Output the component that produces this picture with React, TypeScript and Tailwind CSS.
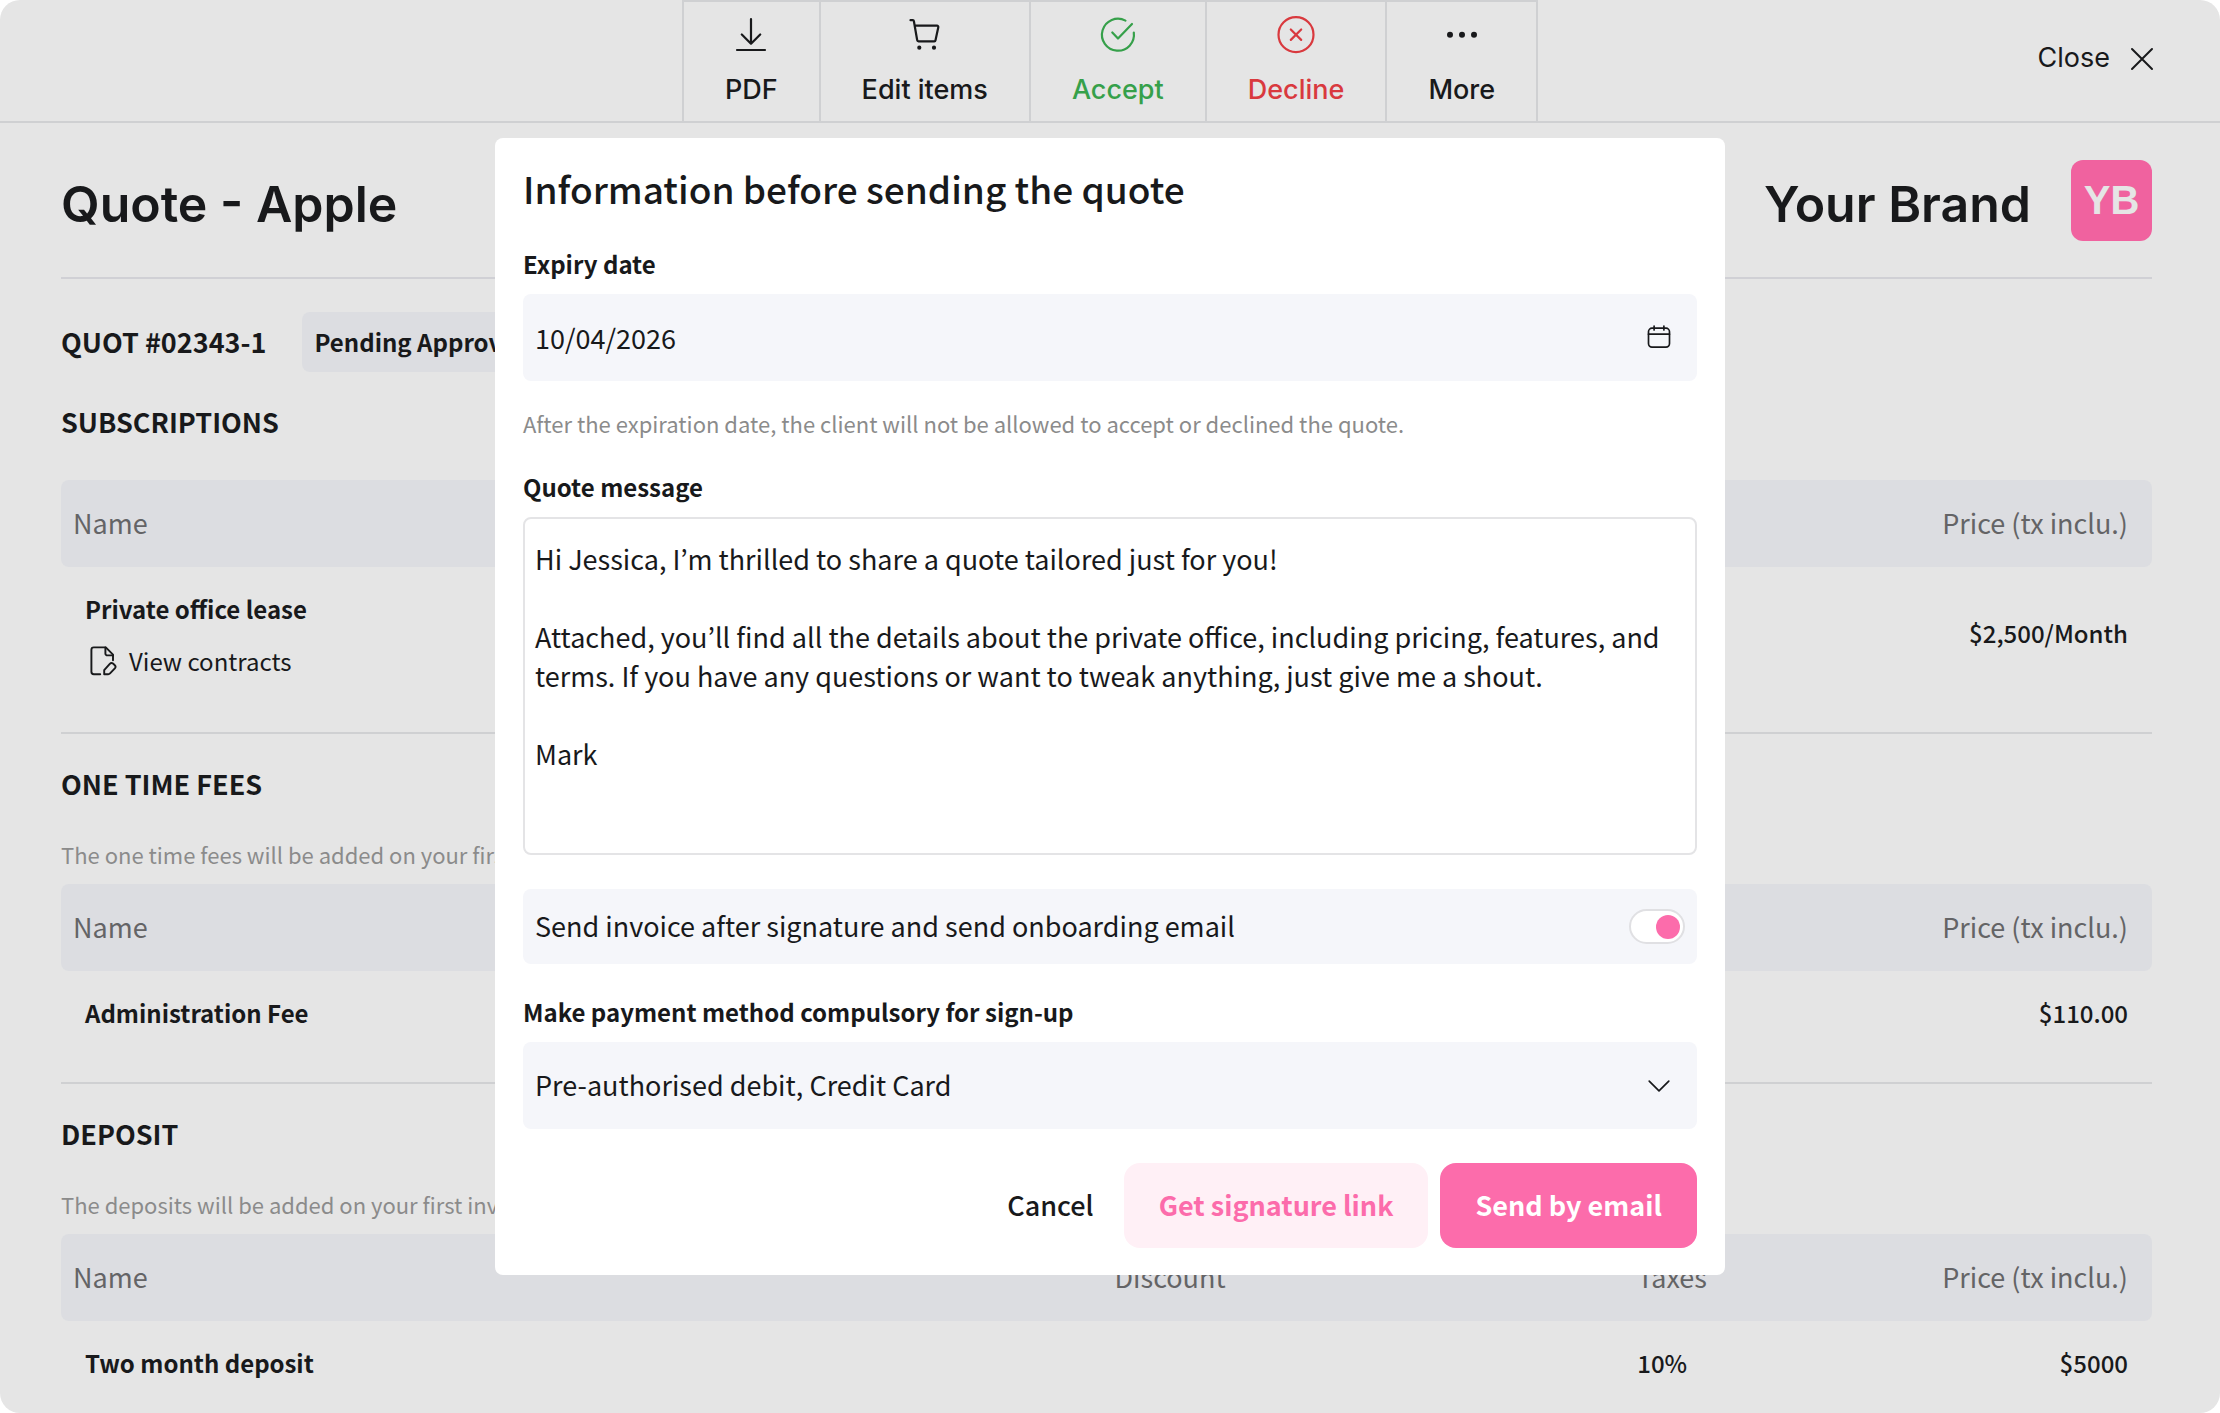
import { ReactNode } from 'react';
import clsx from 'clsx';

const fees = {
    subscriptions: [
        { name: 'Private office lease', price: '$2,500/Month', contracts: true },
    ],
    oneTime: [{ name: 'Administration Fee', price: '$110.00' }],
    deposit: [{ name: 'Two month deposit', taxes: '10%', price: '$5000' }],
};

const message = `Hi Jessica, I’m thrilled to share a quote tailored just for you!

Attached, you’ll find all the details about the private office, including pricing, features, and terms. If you have any questions or want to tweak anything, just give me a shout.

Mark`;

interface IconProps {
    size?: string;
    strokeWidth?: number;
    children: ReactNode;
}

const Icon = ({ size = 'size-10', strokeWidth = 2, children }: IconProps) => (
    <svg
        viewBox="0 0 40 40"
        fill="none"
        stroke="currentColor"
        strokeWidth={strokeWidth}
        strokeLinecap="round"
        strokeLinejoin="round"
        className={clsx('shrink-0', size)}
        aria-hidden="true"
    >
        {children}
    </svg>
);

const DownloadIcon = () => (
    <Icon strokeWidth={2.2}>
        <path d="M20 5v24.500M10.800 20.500l9.200 9.200 9.200-9.200M6 36h28" />
    </Icon>
);

const CartIcon = () => (
    <Icon strokeWidth={2.2}>
        <path d="M5.500 6.200h2.300c.6 0 1 .4 1.100 1l3.300 19c.1.700.6 1.100 1.300 1.100h15.800c.6 0 1.100-.4 1.200-1l2.800-13c.2-.9-.4-1.600-1.300-1.600H9.800" />
        <circle cx="14.300" cy="33.700" r="1" fill="currentColor" />
        <circle cx="29" cy="33.700" r="1" fill="currentColor" />
    </Icon>
);

const AcceptIcon = () => (
    <Icon strokeWidth={2.2}>
        <path d="M35.800 18.500A16 16 0 1 1 27.500 6.600" />
        <path d="m14.300 18.500 5.700 6L34 10" />
    </Icon>
);

const DeclineIcon = () => (
    <Icon strokeWidth={2.2}>
        <circle cx="20" cy="20.700" r="17.500" />
        <path d="m14.800 15.500 10.400 10.400M25.200 15.500 14.800 25.900" />
    </Icon>
);

const MoreIcon = () => (
    <Icon>
        <g fill="currentColor" stroke="none">
            <circle cx="8" cy="20.700" r="3" />
            <circle cx="20" cy="20.700" r="3" />
            <circle cx="32" cy="20.700" r="3" />
        </g>
    </Icon>
);

interface ToolbarButtonProps {
    label: string;
    icon: ReactNode;
    className?: string;
}

const ToolbarButton = ({ label, icon, className }: ToolbarButtonProps) => (
    <button
        type="button"
        className={clsx(
            'flex flex-col items-center gap-[18px] border-r-2 border-[#cfd0d2] px-[41px] pt-3 text-[27px] leading-9',
            className
        )}
    >
        {icon}
        {label}
    </button>
);

interface FeeRow {
    name: string;
    taxes?: string;
    price: string;
    contracts?: boolean;
}

interface FeeTableProps {
    rows: FeeRow[];
}

const FeeTable = ({ rows }: FeeTableProps) => (
    <table className="w-full table-fixed border-separate border-spacing-0">
        <thead>
            <tr className="h-[87px] text-left text-[27px] text-[#646466] *:bg-[#dcdde1] *:font-normal">
                <th className="w-1/2 rounded-l-lg pl-3">Name</th>
                <th className="w-1/4 pl-2">Discount</th>
                <th className="pl-2">Taxes</th>
                <th className="rounded-r-lg pr-6 text-right">Price (tx inclu.)</th>
            </tr>
        </thead>
        <tbody>
            {rows.map((row) => (
                <tr key={row.name} className="text-[24px] leading-8 font-medium">
                    <td className="pt-[22px] pl-6">
                        <div className="py-1 font-bold">{row.name}</div>
                        {row.contracts && (
                            <a href="#contracts" className="mt-4 flex items-center gap-3 font-normal">
                                <Icon size="size-8" strokeWidth={2.4}>
                                    <path d="M19 36.500h-8a3 3 0 0 1-3-3V6a3 3 0 0 1 3-3h15l9 9v7" />
                                    <path d="M25.500 3v7.500a2.500 2.500 0 0 0 2.500 2.500h7" />
                                    <path d="M24 36.500v-5l7-8a3 3 0 0 1 4-.3l2 1.800a3 3 0 0 1 .3 4.200l-6 6.300a3.200 3.200 0 0 1-2.300 1z" />
                                </Icon>
                                View contracts
                            </a>
                        )}
                    </td>
                    <td />
                    <td className="pt-[22px] pl-2">{row.taxes}</td>
                    <td className="pt-[22px] pr-6 text-right">{row.price}</td>
                </tr>
            ))}
        </tbody>
    </table>
);

const fieldClass = 'h-[87px] w-full rounded-lg bg-[#f5f6fa] px-3 text-[27px]';
const labelClass = 'block text-[24px] leading-8 font-bold';
const fieldIconClass = 'pointer-events-none absolute inset-y-0 right-6 flex items-center';

const SendQuoteDialog = () => (
    <div className="absolute inset-x-0 top-[138px] flex justify-center">
        <form
            role="dialog"
            aria-labelledby="dialog-title"
            className="w-[1230px] rounded-lg bg-white px-7 pt-[26px] pb-[27px]"
        >
            <h2 id="dialog-title" className="text-[37px] leading-[48px] font-medium">
                Information before sending the quote
            </h2>
            <label htmlFor="expiry" className={clsx(labelClass, 'mt-9')}>
                Expiry date
            </label>
            <div className="relative mt-3.5">
                <input id="expiry" type="text" defaultValue="10/04/2026" className={fieldClass} />
                <span className={fieldIconClass}>
                    <Icon size="size-7" strokeWidth={2.4}>
                        <rect x="5" y="6" width="30" height="27" rx="5" />
                        <path d="M5 14.500h30M13 3v5.500M27 3v5.500" />
                    </Icon>
                </span>
            </div>
            <p className="mt-[26px] text-[22px] leading-8 text-[#8b8b8b]">
                After the expiration date, the client will not be allowed to accept or declined the quote.
            </p>
            <label htmlFor="message" className={clsx(labelClass, 'mt-8')}>
                Quote message
            </label>
            <textarea
                id="message"
                defaultValue={message}
                className="mt-3.5 block h-[338px] w-full resize-none rounded-lg border-2 border-[#e4e4e6] px-2.5 py-5 text-[27px] leading-[39px]"
            />
            <div className="mt-[34px] flex h-[75px] items-center justify-between rounded-lg bg-[#f5f6fa] px-3">
                <label htmlFor="onboarding" className="text-[27px]">
                    Send invoice after signature and send onboarding email
                </label>
                <input
                    id="onboarding"
                    type="checkbox"
                    role="switch"
                    defaultChecked
                    className="flex h-[35px] w-14 appearance-none items-center rounded-full border-2 border-[#e0e0e3] bg-white px-[3px] before:size-6 before:rounded-full before:bg-[#fc6cab] checked:justify-end"
                />
            </div>
            <label htmlFor="payment" className={clsx(labelClass, 'mt-8')}>
                Make payment method compulsory for sign-up
            </label>
            <div className="relative mt-3.5">
                <select id="payment" className={clsx(fieldClass, 'appearance-none')}>
                    <option>Pre-authorised debit, Credit Card</option>
                </select>
                <span className={fieldIconClass}>
                    <Icon size="size-7" strokeWidth={2.4}>
                        <path d="m6 13 14 14 14-14" />
                    </Icon>
                </span>
            </div>
            <div className="mt-[34px] flex h-[85px] justify-end gap-3 text-[27px] font-bold">
                <button type="button" className="px-[18px] font-medium">
                    Cancel
                </button>
                <button type="button" className="rounded-2xl bg-[#fff0f6] px-[35px] text-[#fc6cab]">
                    Get signature link
                </button>
                <button type="submit" className="rounded-2xl bg-[#fc6cab] px-[35px] text-white">
                    Send by email
                </button>
            </div>
        </form>
    </div>
);

interface FeeSectionProps {
    title: string;
    note?: string;
    rows: FeeRow[];
    className?: string;
}

const FeeSection = ({ title, note, rows, className }: FeeSectionProps) => (
    <section className={clsx('border-[#cfd0d2] pt-[30px]', className)}>
        <h2 className="text-[27px] leading-10 font-bold">{title}</h2>
        {note ? (
            <p className="mt-[34px] mb-3.5 text-[22px] leading-8 text-[#8b8b8b]">{note}</p>
        ) : (
            <div className="h-[38px]" />
        )}
        <FeeTable rows={rows} />
    </section>
);

export default function App() {
    return (
        <div className="bg-white">
            <div className="relative min-h-screen overflow-hidden rounded-[20px] bg-[#e5e5e5] font-['Noto_Sans_CJK_KR',sans-serif] text-[#18191b]">
                <header className="grid h-[123px] grid-cols-[1fr_auto_1fr] border-b-2 border-[#cfd0d2] font-[Inter,sans-serif] font-medium">
                    <nav className="col-start-2 flex border-t-2 border-l-2 border-[#cfd0d2]">
                        <ToolbarButton label="PDF" icon={<DownloadIcon />} />
                        <ToolbarButton label="Edit items" icon={<CartIcon />} />
                        <ToolbarButton label="Accept" icon={<AcceptIcon />} className="text-[#36a04a]" />
                        <ToolbarButton label="Decline" icon={<DeclineIcon />} className="text-[#d9393e]" />
                        <ToolbarButton label="More" icon={<MoreIcon />} />
                    </nav>
                    <button
                        type="button"
                        className="mr-[58px] flex items-center gap-3 justify-self-end pb-1 text-[27px] font-normal"
                    >
                        Close
                        <Icon>
                            <path d="M10 10l20 20M30 10 10 30" />
                        </Icon>
                    </button>
                </header>

                <main className="pr-[68px] pl-[61px]">
                    <div className="flex h-[156px] items-center justify-between border-b-2 border-[#d0d0d5] font-[Inter,sans-serif] text-[50px] font-semibold">
                        <h1 className="pt-2">Quote - Apple</h1>
                        <div className="flex items-center gap-10">
                            <span className="pt-2">Your Brand</span>
                            <span className="flex size-[81px] items-center justify-center rounded-xl bg-[#f0629f] font-['Liberation_Sans',sans-serif] text-[40px] font-bold text-[#e5e5e5]">
                                YB
                            </span>
                        </div>
                    </div>

                    <div className="mt-[33px] flex items-center gap-9">
                        <span className="text-[27px] font-bold">QUOT #02343-1</span>
                        <span className="flex h-[60px] items-center rounded-lg bg-[#dcdde1] px-3 text-[24px] font-bold">
                            Pending Approval
                        </span>
                    </div>

                    <FeeSection
                        title="SUBSCRIPTIONS"
                        rows={fees.subscriptions}
                        className="h-[362px] border-b-2"
                    />
                    <FeeSection
                        title="ONE TIME FEES"
                        note="The one time fees will be added on your first invoice."
                        rows={fees.oneTime}
                        className="h-[350px] border-b-2"
                    />
                    <FeeSection
                        title="DEPOSIT"
                        note="The deposits will be added on your first invoice."
                        rows={fees.deposit}
                    />
                </main>

                <SendQuoteDialog />
            </div>
        </div>
    );
}
